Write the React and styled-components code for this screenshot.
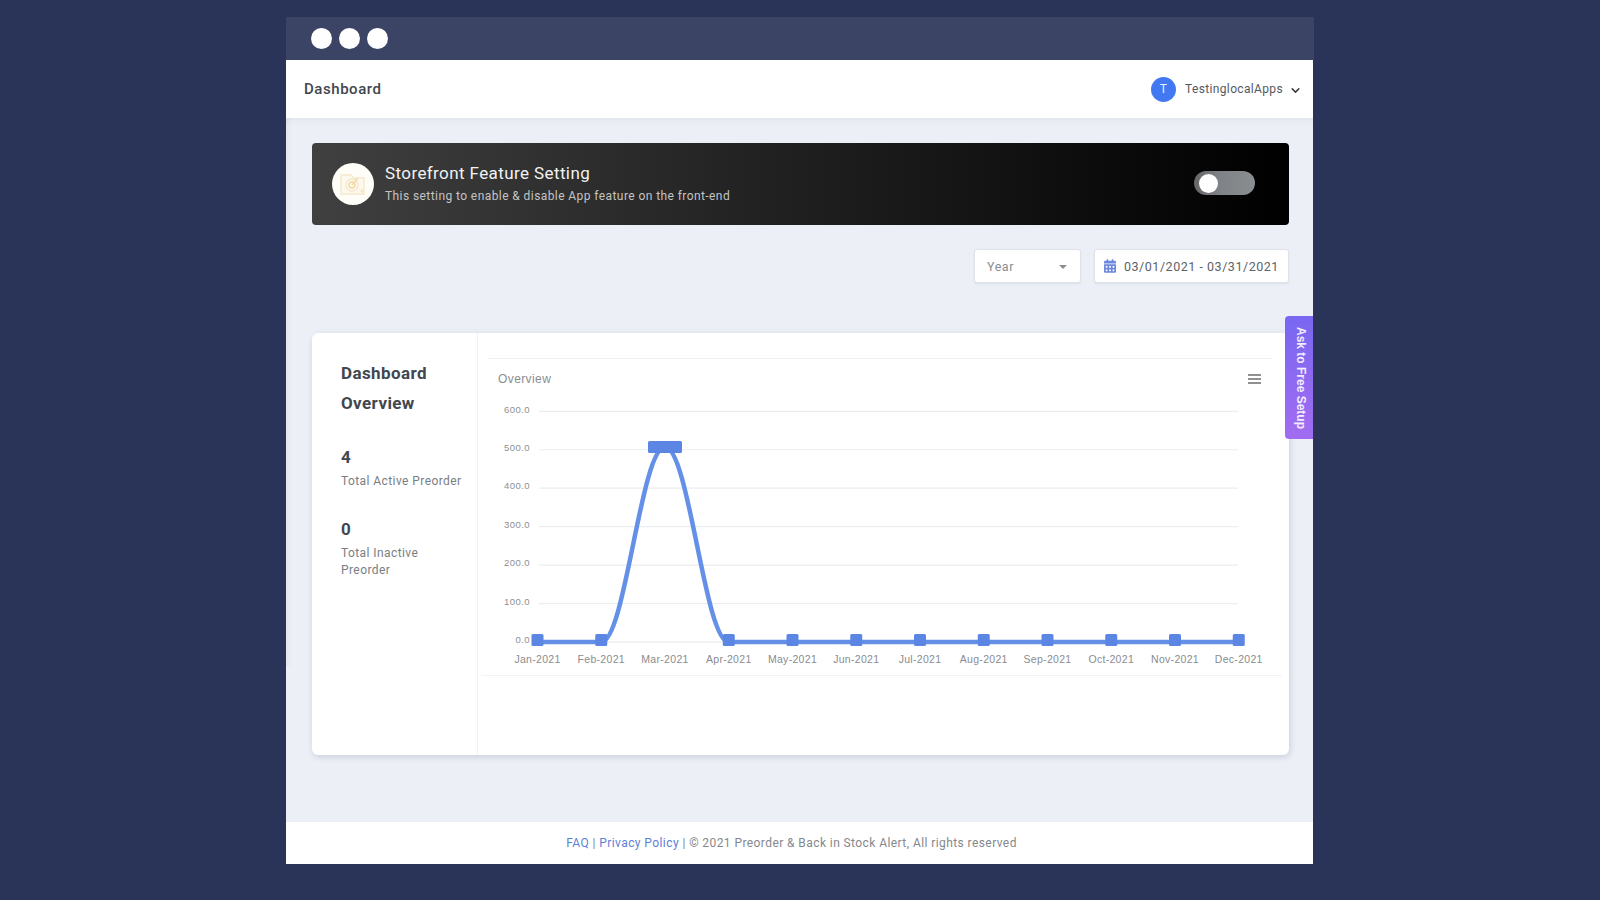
import React from "react";
import styled, { createGlobalStyle } from "styled-components";
import { FaCalendarAlt } from "react-icons/fa";
import { ChevronDown } from "lucide-react";

const GlobalStyle = createGlobalStyle`
  html, body {
    margin: 0;
    padding: 0;
    background: #2a3358;
    font-family: Roboto, "Liberation Sans", sans-serif;
  }
`;

const Page = styled.div`
  width: 1600px;
  height: 900px;
  overflow: hidden;
  padding: 17px 0 0 286px;
  box-sizing: border-box;
`;
const Frame = styled.div`
  width: 1027px;
  height: 847px;
  display: flex;
  flex-direction: column;
`;
const TitleBar = styled.div`
  height: 43px;
  flex: none;
  margin-right: -1px;
  background: #3c4465;
  display: flex;
  align-items: center;
  gap: 7px;
  padding-left: 25px;
`;
const Dot = styled.span`
  width: 21px;
  height: 21px;
  border-radius: 50%;
  background: #fff;
`;
const Header = styled.header`
  height: 58px;
  flex: none;
  background: #fff;
  display: flex;
  align-items: center;
  justify-content: space-between;
  padding: 0 11px 0 18px;
`;
const PageTitle = styled.h1`
  margin: -1px 0 0;
  font-size: 15px;
  font-weight: 500;
  letter-spacing: 0.55px;
  color: #41474e;
`;
const UserMenu = styled.div`
  display: flex;
  align-items: center;
  color: #55595f;
  font-size: 12px;
  letter-spacing: 0.35px;
`;
const Avatar = styled.span`
  width: 25px;
  height: 25px;
  border-radius: 50%;
  margin-right: 9px;
  background: #4279f2;
  color: #e8f0ff;
  font-size: 12px;
  display: flex;
  align-items: center;
  justify-content: center;
`;
const Caret = styled(ChevronDown)`
  width: 13px;
  height: 13px;
  margin: 3px 0 0 6px;
  stroke-width: 3;
  color: #444;
`;
const Main = styled.main`
  flex: 1;
  position: relative;
  background: #ecf0f6;
  box-shadow: inset 0 8px 8px -6px rgba(0, 0, 0, 0.05);
  padding: 25px 24px 0 26px;
  display: flex;
  flex-direction: column;
  &::before {
    content: "";
    position: absolute;
    left: 0;
    top: 0;
    width: 6px;
    height: 548px;
    background: linear-gradient(90deg, rgba(0, 0, 0, 0.04), rgba(0, 0, 0, 0));
  }
`;
const Banner = styled.section`
  height: 82px;
  border-radius: 4px;
  background: linear-gradient(90deg, #404040 0%, #222 45%, #000 100%);
  display: flex;
  align-items: center;
  padding: 0 34px 0 20px;
`;
const BannerLogo = styled.div`
  width: 42px;
  height: 42px;
  border-radius: 50%;
  background: #fffdf8;
  margin-right: 11px;
  display: flex;
  align-items: center;
  justify-content: center;
`;
const BannerText = styled.div`
  flex: 1;
  padding-bottom: 1px;
`;
const BannerTitle = styled.div`
  color: #f2f2f2;
  font-size: 17px;
  letter-spacing: 0.4px;
  line-height: 22px;
`;
const BannerSub = styled.div`
  color: #c4c4c4;
  font-size: 12px;
  letter-spacing: 0.42px;
  line-height: 20px;
  margin-top: 2px;
`;
const Toggle = styled.div`
  width: 61px;
  height: 24px;
  margin-bottom: 2px;
  border-radius: 12px;
  background: linear-gradient(90deg, #666 0%, #7e8286 40%, #8a8e91 100%);
  display: flex;
  align-items: center;
  padding-left: 5px;
  box-sizing: border-box;
`;
const Knob = styled.span`
  width: 19px;
  height: 19px;
  border-radius: 50%;
  background: #fff;
`;
const Filters = styled.div`
  display: flex;
  justify-content: flex-end;
  gap: 13px;
  margin-top: 24px;
`;
const FilterBox = styled.div`
  height: 34px;
  box-sizing: border-box;
  background: #fff;
  border: 1px solid #dfe2e8;
  border-radius: 3px;
  box-shadow: 0 1px 2px rgba(60, 70, 100, 0.1);
  display: flex;
  align-items: center;
  white-space: nowrap;
  font-size: 12.5px;
  letter-spacing: 0.53px;
  width: ${(p) => p.$width}px;
  padding: 0 ${(p) => p.$pad}px 0 12px;
  color: ${(p) => p.$color};
`;
const SelectValue = styled.span`
  flex: 1;
`;
const SelectArrow = styled.span`
  width: 0;
  height: 0;
  margin-top: 2px;
  border-left: 4px solid transparent;
  border-right: 4px solid transparent;
  border-top: 4px solid #8d8d8d;
`;
const CalendarIcon = styled(FaCalendarAlt)`
  width: 12px;
  height: 14px;
  color: #6d88dc;
  margin: 0 8px 0 -3px;
`;
const Card = styled.section`
  height: 422px;
  margin-top: 50px;
  background: #fff;
  border-radius: 6px;
  box-shadow: 1px 2px 6px rgba(60, 70, 100, 0.2);
  display: flex;
`;
const Summary = styled.aside`
  width: 166px;
  flex: none;
  box-sizing: border-box;
  border-right: 1px solid #f0f1f4;
  padding: 25px 8px 0 29px;
`;
const SummaryTitle = styled.h2`
  margin: 0 0 27px;
  font-size: 17px;
  font-weight: 700;
  letter-spacing: 0.4px;
  line-height: 30px;
  color: #41474e;
`;
const Stat = styled.div`
  margin-bottom: 27px;
`;
const StatValue = styled.div`
  font-size: 17px;
  font-weight: 700;
  line-height: 24px;
  color: #41474e;
`;
const StatLabel = styled.div`
  font-size: 12px;
  letter-spacing: 0.42px;
  line-height: 17px;
  margin-top: 4px;
  color: #7a7e83;
`;
const ChartPane = styled.div`
  flex: 1;
  min-width: 0;
`;
const ChartSvg = styled.svg`
  display: block;
  font-family: "Liberation Sans", Arial, sans-serif;
`;
const SideTab = styled.div`
  position: absolute;
  top: 198px;
  right: 0;
  width: 28px;
  height: 123px;
  box-sizing: border-box;
  padding: 1px 0 0 3px;
  border-radius: 4px 0 0 4px;
  background: linear-gradient(180deg, #7867f1 0%, #a26cf1 100%);
  color: #f1ecff;
  font-family: "Liberation Sans", Arial, sans-serif;
  font-size: 12px;
  font-weight: 700;
  writing-mode: vertical-rl;
  display: flex;
  align-items: center;
  justify-content: center;
  white-space: nowrap;
`;
const Footer = styled.footer`
  height: 42px;
  flex: none;
  background: #fff;
  display: flex;
  align-items: center;
  justify-content: center;
  padding-right: 16px;
  font-size: 12px;
  letter-spacing: 0.42px;
  white-space: pre;
  color: #85888c;
`;
const FooterLink = styled.a`
  color: #5d7fd6;
  text-decoration: none;
`;

const months = ["Jan", "Feb", "Mar", "Apr", "May", "Jun", "Jul", "Aug", "Sep", "Oct", "Nov", "Dec"];
const ticks = [600, 500, 400, 300, 200, 100, 0];

// chart numbers are relative to the pane
const xAt = (i) => 59.5 + i * 63.75;
const yAt = (v) => 309 - v * 0.3845;

function Chart() {
  const feb = xAt(1);
  const mar = xAt(2);
  const apr = xAt(3);
  const base = yAt(0);
  const peak = yAt(507);
  const line = `M${xAt(0)} ${base} L${feb} ${base} C${feb + 24} ${base} ${mar - 24} ${peak} ${mar} ${peak} C${mar + 24} ${peak} ${apr - 24} ${base} ${apr} ${base} L${xAt(11)} ${base}`;

  return (
    <ChartSvg width="809" height="422" viewBox="0 0 809 422">
      <line x1="10" x2="794" y1="25.5" y2="25.5" stroke="#f1f2f4" />
      <line x1="3" x2="804" y1="342.5" y2="342.5" stroke="#f1f2f4" />
      <text x="20" y="50" fontSize="12" letterSpacing="0.4" fill="#8b8d90">Overview</text>
      {[0, 1, 2].map((i) => (
        <rect key={i} x="770" y={41 + i * 4} width="13" height="2" fill="#909090" />
      ))}
      {ticks.map((t) => (
        <g key={t}>
          <line x1="61" x2="760" y1={yAt(t)} y2={yAt(t)} stroke={t === 0 ? "#e4e5e8" : "#eceDF0"} strokeWidth="1.2" />
          <text x="52" y={yAt(t) + 1.2} textAnchor="end" fontSize="9.5" letterSpacing="0.45" fill="#8e8f92">
            {t.toFixed(1)}
          </text>
        </g>
      ))}
      <path d={line} fill="none" stroke="#6590e8" strokeWidth="4.5" />
      {months.map((m, i) =>
        i === 2 ? (
          <rect key={m} x={xAt(i) - 17} y={108} width="34" height="12" rx="1.5" fill="#5c86e4" />
        ) : (
          <rect key={m} x={xAt(i) - 6} y={base - 8} width="12" height="12" rx="1.5" fill="#5c86e4" />
        )
      )}
      {months.map((m, i) => (
        <text key={m} x={xAt(i)} y="330" textAnchor="middle" fontSize="10.5" letterSpacing="0.3" fill="#8a8c8f">
          {m}-2021
        </text>
      ))}
    </ChartSvg>
  );
}

function LogoMark() {
  return (
    <svg width="28" height="26" viewBox="0 0 28 26" fill="none" stroke="#f6e8cb" strokeWidth="1.4">
      <path d="M2 4h10l3 3h10v16H2z" fill="#fdf9ef" />
      <circle cx="13" cy="14" r="6" />
      <circle cx="13" cy="14" r="3" stroke="#f1d9a8" />
      <path d="M13 14l6-7" stroke="#f1d9a8" />
      <circle cx="23" cy="20" r="1" fill="#f1d9a8" />
    </svg>
  );
}

export default function App() {
  return (
    <Page>
      <GlobalStyle />
      <Frame>
        <TitleBar>
          <Dot />
          <Dot />
          <Dot />
        </TitleBar>
        <Header>
          <PageTitle>Dashboard</PageTitle>
          <UserMenu>
            <Avatar>T</Avatar>
            TestinglocalApps
            <Caret />
          </UserMenu>
        </Header>
        <Main>
          <Banner>
            <BannerLogo>
              <LogoMark />
            </BannerLogo>
            <BannerText>
              <BannerTitle>Storefront Feature Setting</BannerTitle>
              <BannerSub>This setting to enable &amp; disable App feature on the front-end</BannerSub>
            </BannerText>
            <Toggle>
              <Knob />
            </Toggle>
          </Banner>
          <Filters>
            <FilterBox $width={107} $pad={13} $color="#8a8d91">
              <SelectValue>Year</SelectValue>
              <SelectArrow />
            </FilterBox>
            <FilterBox $width={195} $pad={9} $color="#5e6267">
              <CalendarIcon />
              03/01/2021 - 03/31/2021
            </FilterBox>
          </Filters>
          <Card>
            <Summary>
              <SummaryTitle>
                Dashboard
                <br />
                Overview
              </SummaryTitle>
              <Stat>
                <StatValue>4</StatValue>
                <StatLabel>Total Active Preorder</StatLabel>
              </Stat>
              <Stat>
                <StatValue>0</StatValue>
                <StatLabel>Total Inactive Preorder</StatLabel>
              </Stat>
            </Summary>
            <ChartPane>
              <Chart />
            </ChartPane>
          </Card>
          <SideTab>Ask to Free Setup</SideTab>
        </Main>
        <Footer>
          <FooterLink href="#">FAQ</FooterLink>{" | "}<FooterLink href="#">Privacy Policy</FooterLink>{" | © 2021 Preorder & Back in Stock Alert, All rights reserved"}
        </Footer>
      </Frame>
    </Page>
  );
}
